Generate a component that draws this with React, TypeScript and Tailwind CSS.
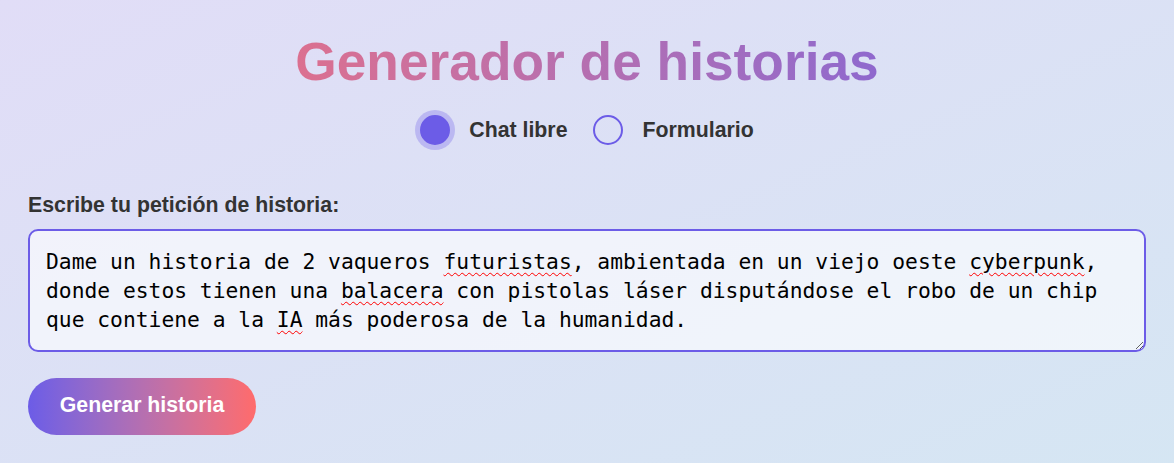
import { useState } from "react";

const Wavy = ({ children }: { children: string }) => (
  <span className="underline decoration-wavy decoration-[#ff0000] decoration-1 underline-offset-[3px]">{children}</span>
);

export default function App() {
  const [mode, setMode] = useState<"chat" | "form">("chat");

  return (
    <div className="min-h-screen bg-gradient-to-br from-[#e1ddf7] to-[#d5e6f3] px-[28px] pt-[30px] pb-10 font-['Liberation_Sans',Arial,sans-serif] text-[21.3px] text-[#333]">
      <h1 className="bg-gradient-to-r from-[#ff6b6b] to-[#6c5ce7] bg-clip-text text-center text-[53.3px] leading-[1.2] font-bold text-transparent">
        Generador de historias
      </h1>

      <div className="mt-[21px] flex items-center justify-center">
        <label className="flex cursor-pointer items-center" onClick={() => setMode("chat")}>
          <span
            className={`h-[30px] w-[30px] rounded-full border-2 border-[#6c5ce7] ${
              mode === "chat" ? "bg-[#6c5ce7] shadow-[0_0_0_5px_rgba(108,92,231,0.3)]" : "bg-transparent"
            }`}
          />
          <span className="ml-[19px] leading-6 font-bold">Chat libre</span>
        </label>
        <label className="ml-[26px] flex cursor-pointer items-center" onClick={() => setMode("form")}>
          <span
            className={`h-[30px] w-[30px] rounded-full border-2 border-[#6c5ce7] ${
              mode === "form" ? "bg-[#6c5ce7] shadow-[0_0_0_5px_rgba(108,92,231,0.3)]" : "bg-transparent"
            }`}
          />
          <span className="ml-[19px] leading-6 font-bold">Formulario</span>
        </label>
      </div>

      <div className="mt-[48px]">
        <div className="leading-6 font-bold">Escribe tu petición de historia:</div>
        <div className="mt-[12px] h-[123px] resize-y overflow-auto rounded-[10px] border-2 border-[#6c5ce7] bg-white/60 p-4 font-['DejaVu_Sans_Mono',monospace] text-[21.3px] leading-[29px] text-black">
          Dame un historia de 2 vaqueros <Wavy>futuristas</Wavy>, ambientada en un viejo oeste <Wavy>cyberpunk</Wavy>,
          donde estos tienen una <Wavy>balacera</Wavy> con pistolas láser disputándose el robo de un chip que contiene a la{" "}
          <Wavy>IA</Wavy> más poderosa de la humanidad.
        </div>
      </div>

      <button className="mt-[26px] h-[57px] w-[228px] rounded-full bg-gradient-to-r from-[#6c5ce7] to-[#ff6b6b] font-bold text-white">
        Generar historia
      </button>
    </div>
  );
}
